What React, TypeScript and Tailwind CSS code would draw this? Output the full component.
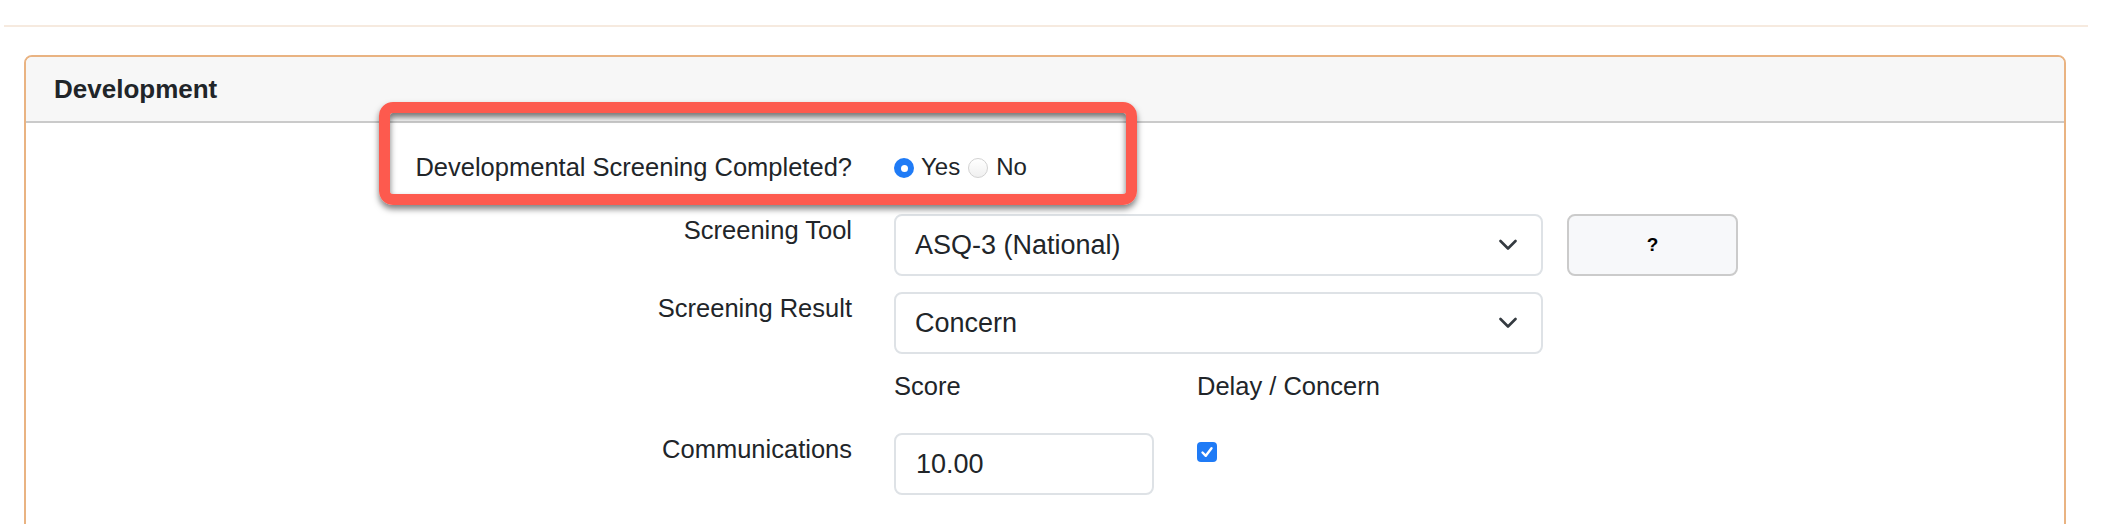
import React from 'react'

const font = { fontFamily: '"Liberation Sans", Arial, sans-serif' }

function Chevron() {
  return (
    <svg className="h-[12px] w-[18px]" viewBox="0 0 18 12" fill="none">
      <polyline points="1.5,2 9,9.5 16.5,2" stroke="#343a40" strokeWidth="2.6" strokeLinecap="round" strokeLinejoin="round" />
    </svg>
  )
}

function Select({ value }: { value: string }) {
  return (
    <div className="flex h-[62px] w-[649px] items-center justify-between rounded-[8px] border-2 border-[#dee2e6] bg-white pr-[24px] pl-[19px]">
      <span className="text-[27px] text-[#212529]">{value}</span>
      <Chevron />
    </div>
  )
}

function Radio({ checked }: { checked?: boolean }) {
  if (checked) {
    return (
      <span className="mt-[7px] flex h-[20px] w-[20px] shrink-0 items-center justify-center rounded-full bg-[#1f7bf6]">
        <span className="h-[7px] w-[7px] rounded-full bg-white" />
      </span>
    )
  }
  return <span className="mt-[7px] ml-[8px] block h-[20px] w-[20px] shrink-0 rounded-full border border-[#d2d2d2] bg-gradient-to-b from-white to-[#f0f0f0]" />
}

export default function App() {
  return (
    <div className="min-h-screen bg-white text-[#212529]" style={font}>
      <div className="pt-[25px]">
        <div className="ml-[4px] h-[2px] w-[2084px] bg-[#f6eadf]" />
      </div>

      <div className="relative mt-[28px] ml-[24px] w-[2042px] rounded-[8px] border-2 border-[#e9b382]">
        <div className="flex h-[66px] items-center rounded-t-[6px] border-b-2 border-[#cacaca] bg-[#f7f7f7] pl-[28px]">
          <h5 className="text-[26px] font-bold text-[#212529]">Development</h5>
        </div>

        <div className="pt-[28px] pb-[60px]">
          <div className="mb-[31px] flex h-[32px] gap-[42px]">
            <div className="w-[826px] text-right text-[25.5px] leading-[32px]">Developmental Screening Completed?</div>
            <div className="flex h-[32px] items-start">
              <Radio checked />
              <span className="ml-[7px] text-[24px] leading-[32px]">Yes</span>
              <Radio />
              <span className="ml-[8px] text-[24px] leading-[32px]">No</span>
            </div>
          </div>

          <div className="mb-[16px] flex gap-[42px]">
            <div className="w-[826px] text-right text-[25.5px] leading-[32px]">Screening Tool</div>
            <div className="flex gap-[24px]">
              <Select value="ASQ-3 (National)" />
              <button className="flex h-[62px] w-[171px] items-center justify-center rounded-[8px] border-2 border-[#cbcbcb] bg-[#f7f8fa] text-[19px] font-bold text-black">
                ?
              </button>
            </div>
          </div>

          <div className="mb-[16px] flex gap-[42px]">
            <div className="w-[826px] text-right text-[25.5px] leading-[32px]">Screening Result</div>
            <Select value="Concern" />
          </div>

          <div className="mb-[31px] flex gap-[42px]">
            <div className="w-[826px]" />
            <div className="flex gap-[43px] text-[25.5px] leading-[32px]">
              <div className="w-[260px]">Score</div>
              <div>Delay / Concern</div>
            </div>
          </div>

          <div className="flex gap-[42px]">
            <div className="w-[826px] text-right text-[25.5px] leading-[32px]">Communications</div>
            <div className="flex gap-[43px]">
              <div className="flex h-[62px] w-[260px] items-center rounded-[8px] border-2 border-[#dee2e6] pl-[20px] text-[27px]">
                10.00
              </div>
              <span className="mt-[9px] flex h-[20px] w-[20px] items-center justify-center rounded-[4px] bg-[#1f7bf6]">
                <svg className="h-[14px] w-[14px]" viewBox="0 0 14 14" fill="none">
                  <polyline points="2.5,7.5 5.8,10.8 11.5,3.2" stroke="white" strokeWidth="2.4" strokeLinecap="round" strokeLinejoin="round" />
                </svg>
              </span>
            </div>
          </div>
        </div>

        {/* annotation box drawn over the screenshot */}
        <div className="pointer-events-none absolute top-[45px] left-[353px] h-[103px] w-[758px] rounded-[14px] border-[11px] border-[#fd5a4e] shadow-[0_4px_6px_rgba(0,0,0,0.5),inset_0_4px_6px_rgba(0,0,0,0.55)]" />
      </div>
    </div>
  )
}
